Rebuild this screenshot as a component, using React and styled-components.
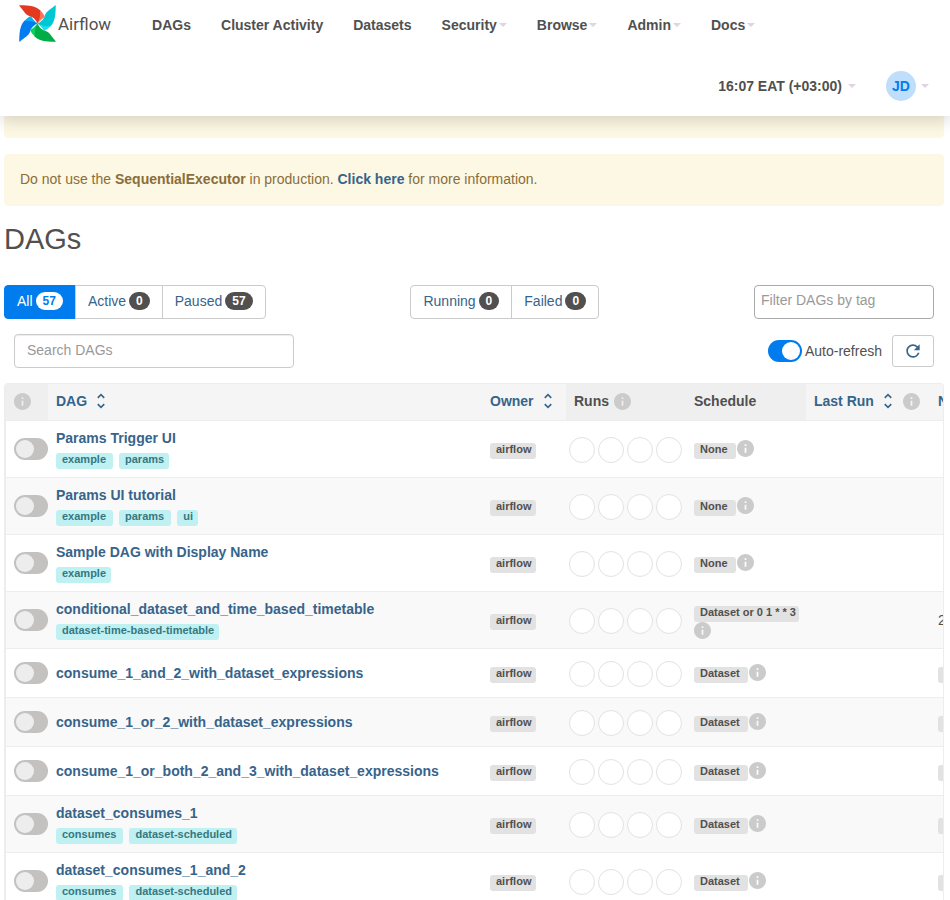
import React from "react";
import styled, { createGlobalStyle, css } from "styled-components";
import { MdRefresh, MdUnfoldMore } from "react-icons/md";

const color = {
  text: "#51504f",
  link: "#36648b",
  blue: "#017cee",
  border: "#cbcbcb",
  line: "#ededed",
  caution: "#8a6d3b",
};

const GlobalStyle = createGlobalStyle`
  * { box-sizing: border-box; }
  html { overflow: hidden; }
  body {
    margin: 0;
    background: #fff;
    color: ${color.text};
    font-family: "Liberation Sans", Arial, sans-serif;
    font-size: 14px;
    line-height: 20px;
  }
  button, input { font: inherit; color: inherit; }
  a { color: ${color.link}; text-decoration: none; }
`;

/* ---------- header ---------- */

const Header = styled.header`
  position: sticky;
  top: 0;
  z-index: 2;
  background: #fff;
  box-shadow: 0 5px 15px rgba(0, 0, 0, 0.15);
`;

const NavBar = styled.nav`
  display: flex;
  align-items: center;
  gap: 30px;
  height: 50px;
  padding-left: 19px;
`;

const UserBar = styled.div`
  display: flex;
  justify-content: flex-end;
  align-items: center;
  gap: 30px;
  height: 66px;
  padding: 5px 21px 0 0;
`;

const Brand = styled.a`
  display: flex;
  align-items: center;
  gap: 2px;
  margin: 0 11px 3px 0;
  color: ${color.text};
  font: 400 17px/20px Roboto, sans-serif;
`;

const NavLink = styled.a`
  color: ${color.text};
  font-weight: 700;
`;

const MenuButton = styled.button`
  display: flex;
  align-items: center;
  gap: ${(p) => p.$gap || 2}px;
  padding: 0;
  border: 0;
  background: none;
  font-weight: 700;
  cursor: pointer;

  &::after {
    content: "";
    border: 4px solid transparent;
    border-top-color: #e2d2e2;
    border-bottom: 0;
  }
`;

const Avatar = styled.span`
  display: grid;
  place-items: center;
  width: 30px;
  height: 30px;
  border-radius: 50%;
  background: #bfdefb;
  color: ${color.blue};
`;

/* ---------- page ---------- */

const Main = styled.main`
  padding: 0 6px 0 4px;
`;

const Alert = styled.div`
  min-height: 52px;
  margin-bottom: 16px;
  padding: 14px 15px 16px;
  border: 1px solid #fdf8e4;
  border-radius: 4px;
  background: #fdf8e3;
  color: ${color.caution};

  &:first-child { margin-top: -30px; }
  a { font-weight: 700; }
`;

const Title = styled.h2`
  margin: 0;
  font-size: 29px;
  line-height: 34px;
  font-weight: 400;
`;

const FilterRow = styled.div`
  display: flex;
  justify-content: space-between;
  margin-top: 29px;
`;

const ButtonGroup = styled.div`
  display: flex;
  height: 34px;
`;

const FilterButton = styled.button`
  display: flex;
  align-items: center;
  gap: 3px;
  padding: 0 12px 2px;
  border: 1px solid ${color.border};
  background: #fff;
  color: ${color.link};
  cursor: pointer;

  & + & { margin-left: -1px; }
  &:first-child { border-radius: 4px 0 0 4px; }
  &:last-child { border-radius: 0 4px 4px 0; }

  ${(p) => p.$active && css`
    border-color: ${color.blue};
    background: ${color.blue};
    color: #fff;
  `}
`;

const Badge = styled.span`
  padding: 3px 7px;
  border-radius: 10px;
  background: ${(p) => (p.$active ? "#fff" : color.text)};
  color: ${(p) => (p.$active ? color.blue : "#fff")};
  font-size: 12px;
  font-weight: 700;
  line-height: 12px;
`;

const TextBox = styled.input`
  width: 280px;
  height: 34px;
  padding: 0 12px 2px;
  border: 1px solid ${color.border};
  border-radius: 4px;
  background: #fff;
  box-shadow: inset 0 1px 1px rgba(0, 0, 0, 0.075);

  &::placeholder { color: #999; opacity: 1; }
`;

const TagBox = styled(TextBox)`
  width: 180px;
  margin: 0 10px;
  padding: 0 6px 4px;
  border-color: #aaa;
  box-shadow: none;
`;

const SearchRow = styled.div`
  display: flex;
  justify-content: space-between;
  align-items: center;
  margin: 15px 10px;
`;

const RefreshTools = styled.div`
  display: flex;
  align-items: center;
  gap: 10px;
`;

const SwitchLabel = styled.label`
  display: flex;
  align-items: center;
  gap: 3px;
`;

const Switch = styled.input`
  appearance: none;
  display: block;
  flex: none;
  width: 34px;
  height: 22px;
  margin: 0;
  padding: 2px;
  border-radius: 11px;
  background: #c4c2c1;
  cursor: pointer;

  &::before {
    content: "";
    display: block;
    width: 18px;
    height: 18px;
    border-radius: 50%;
    background: #ededed;
  }
  &:checked { background: ${color.blue}; }
  &:checked::before { margin-left: 12px; background: #fff; }
`;

const RefreshButton = styled.button`
  display: grid;
  place-items: center;
  width: 42px;
  height: 32px;
  padding: 0;
  border: 1px solid ${color.border};
  border-radius: 3px;
  background: #fff;
  color: ${color.link};
  cursor: pointer;
`;

/* ---------- table ---------- */

const TableFrame = styled.div`
  overflow: hidden;
  border: 1px solid ${color.line};
  border-bottom: 0;
  border-radius: 4px 4px 0 0;
`;

const Table = styled.table`
  width: calc(100% + 187px);
  table-layout: fixed;
  border-left: 1px solid ${color.line};
  border-collapse: separate;
  border-spacing: 0;
`;

const Col = styled.col`
  width: ${(p) => (p.$w ? `${p.$w}px` : "auto")};
`;

const HeadCell = styled.th`
  height: 37px;
  padding: 0 8px 2px;
  border-bottom: 1px solid ${color.line};
  background: ${(p) => (p.$plain ? "#efefef" : "#f5f5f5")};
  text-align: left;
  white-space: nowrap;
`;

const HeadContent = styled.div`
  display: flex;
  align-items: center;
  gap: 5px;
`;

const SortLink = styled.a`
  display: flex;
  align-items: center;
  gap: 4px;
`;

const Row = styled.tr`
  &:nth-child(even) { background: #f9f9f9; }
`;

const Cell = styled.td`
  height: 49px;
  padding: 7px 8px 8px;
  border-bottom: 1px solid ${color.line};
  vertical-align: middle;
  white-space: nowrap;
`;

const SwitchCell = styled(Cell)`
  padding: 0 0 1px 8px;
`;

const LabelCell = styled(Cell)`
  padding: 4px 8px 0;
`;

const RunsCell = styled(Cell)`
  padding: 1px 3px 0;
`;

const ScheduleCell = styled(Cell)`
  padding: 1px 8px 0;
`;

const DagLink = styled.a`
  display: block;
  font-weight: 700;
`;

const Tags = styled.div`
  display: flex;
  gap: 6px;
  margin-top: 5px;
`;

const Label = styled.span`
  display: block;
  width: fit-content;
  height: 16px;
  padding: 0 5px 0 6px;
  border-radius: 3px;
  background: #e2e2e2;
  color: ${color.text};
  font-size: 11px;
  font-weight: 700;
  line-height: 13px;
`;

const Tag = styled(Label).attrs({ as: "a" })`
  background: #bff0f2;
  color: #367880;

  &:not(:last-child) { padding-right: 7px; }
`;

const PendingLabel = styled(Label)`
  width: 90px;
`;

const Runs = styled.div`
  display: flex;
  gap: 3px;
`;

const Run = styled.span`
  width: 26px;
  height: 26px;
  border: 1px solid #e2e2e2;
  border-radius: 50%;
  background: #fff;
`;

const Schedule = styled.div`
  display: flex;
  flex-wrap: wrap;
  align-items: flex-start;
  column-gap: 1px;
`;

const ScheduleLabel = styled(Label)`
  margin-top: 3px;
  padding-right: ${(p) => (p.$wide ? 3 : 8)}px;
`;

const InfoSvg = styled.svg`
  display: block;
  flex: none;
  width: 17px;
  height: 17px;
  fill: #cbcbcb;
`;

function InfoIcon() {
  return (
    <InfoSvg viewBox="2 2 20 20" aria-hidden="true">
      <path d="M12 2C6.48 2 2 6.48 2 12s4.48 10 10 10 10-4.48 10-10S17.52 2 12 2zm1 15h-2v-6h2v6zm0-8h-2V7h2v2z" />
    </InfoSvg>
  );
}

const blades = [
  { turn: 270, main: "#017cee", fold: "#00b3fc" },
  { turn: 180, main: "#00ad46", fold: "#04d659" },
  { turn: 90, main: "#00c7d4", fold: "#11e1ee" },
  { turn: 0, main: "#e43921", fold: "#ff7557" },
];

function Pinwheel() {
  return (
    <svg width="37" height="37" viewBox="0 0 36 36" aria-hidden="true">
      {blades.map((b) => (
        <g key={b.turn} transform={`rotate(${b.turn} 18 18)`}>
          <path fill={b.main} d="M.3 .3C9 .2 17 1 21 5.600C22 10 21 14 18 18C16 13.500 13 11.500 10.500 11C6 9.500 5 6 .3 .8Z" />
          <path fill={b.fold} d="M20.500 5.200C23 7.500 24.500 9.500 25 11.800C22 13.500 20 15.500 18 18C20.300 14 21 10 20.500 5.200Z" />
        </g>
      ))}
    </svg>
  );
}

const menus = ["Security", "Browse", "Admin", "Docs"];

const dags = [
  { name: "Params Trigger UI", tags: ["example", "params"], schedule: "None" },
  { name: "Params UI tutorial", tags: ["example", "params", "ui"], schedule: "None" },
  { name: "Sample DAG with Display Name", tags: ["example"], schedule: "None" },
  { name: "conditional_dataset_and_time_based_timetable", tags: ["dataset-time-based-timetable"], schedule: "Dataset or 0 1 * * 3", next: "2024" },
  { name: "consume_1_and_2_with_dataset_expressions", schedule: "Dataset" },
  { name: "consume_1_or_2_with_dataset_expressions", schedule: "Dataset" },
  { name: "consume_1_or_both_2_and_3_with_dataset_expressions", schedule: "Dataset" },
  { name: "dataset_consumes_1", tags: ["consumes", "dataset-scheduled"], schedule: "Dataset" },
  { name: "dataset_consumes_1_and_2", tags: ["consumes", "dataset-scheduled"], schedule: "Dataset" },
];

function Filter({ label, count, active }) {
  return (
    <FilterButton type="button" $active={active} aria-pressed={!!active}>
      {label}
      <Badge $active={active}>{count}</Badge>
    </FilterButton>
  );
}

function Sortable({ children }) {
  return (
    <SortLink href="#sort">
      {children}
      <MdUnfoldMore size={20} aria-hidden="true" />
    </SortLink>
  );
}

function DagRow({ dag }) {
  return (
    <Row>
      <SwitchCell>
        <Switch type="checkbox" role="switch" aria-label={dag.name} />
      </SwitchCell>
      <Cell>
        <DagLink href="#dag">{dag.name}</DagLink>
        {dag.tags && (
          <Tags>
            {dag.tags.map((t) => (
              <Tag key={t} href="#tag">{t}</Tag>
            ))}
          </Tags>
        )}
      </Cell>
      <LabelCell>
        <Label as="a" href="#owner">airflow</Label>
      </LabelCell>
      <RunsCell>
        <Runs>
          <Run /><Run /><Run /><Run />
        </Runs>
      </RunsCell>
      <ScheduleCell>
        <Schedule>
          <ScheduleLabel as="a" href="#schedule" $wide={!!dag.next}>{dag.schedule}</ScheduleLabel>
          <InfoIcon />
        </Schedule>
      </ScheduleCell>
      <Cell />
      {dag.next ? (
        <Cell>{dag.next}</Cell>
      ) : (
        <LabelCell>{dag.schedule === "Dataset" && <PendingLabel />}</LabelCell>
      )}
    </Row>
  );
}

export default function App() {
  return (
    <>
      <GlobalStyle />
      <Header>
        <NavBar>
          <Brand href="#home"><Pinwheel />Airflow</Brand>
          <NavLink href="#dags">DAGs</NavLink>
          <NavLink href="#activity">Cluster Activity</NavLink>
          <NavLink href="#datasets">Datasets</NavLink>
          {menus.map((m) => (
            <MenuButton key={m} type="button">{m}</MenuButton>
          ))}
        </NavBar>
        <UserBar>
          <MenuButton type="button" $gap={6}>16:07 EAT (+03:00)</MenuButton>
          <MenuButton type="button" $gap={5}><Avatar>JD</Avatar></MenuButton>
        </UserBar>
      </Header>
      <Main>
        <Alert />
        <Alert>
          Do not use the <b>SequentialExecutor</b> in production. <a href="#docs">Click here</a> for more information.
        </Alert>
        <Title>DAGs</Title>
        <FilterRow>
          <ButtonGroup>
            <Filter label="All" count={57} active />
            <Filter label="Active" count={0} />
            <Filter label="Paused" count={57} />
          </ButtonGroup>
          <ButtonGroup>
            <Filter label="Running" count={0} />
            <Filter label="Failed" count={0} />
          </ButtonGroup>
          <TagBox type="text" placeholder="Filter DAGs by tag" aria-label="Filter DAGs by tag" />
        </FilterRow>
        <SearchRow>
          <TextBox type="search" placeholder="Search DAGs" aria-label="Search DAGs" />
          <RefreshTools>
            <SwitchLabel>
              <Switch type="checkbox" role="switch" defaultChecked />
              Auto-refresh
            </SwitchLabel>
            <RefreshButton type="button" aria-label="Refresh">
              <MdRefresh size={20} />
            </RefreshButton>
          </RefreshTools>
        </SearchRow>
        <TableFrame>
          <Table>
            <colgroup>
              <Col $w={42} /><Col /><Col $w={84} /><Col $w={120} /><Col $w={120} /><Col $w={124} /><Col $w={200} />
            </colgroup>
            <thead>
              <tr>
                <HeadCell $plain><InfoIcon /></HeadCell>
                <HeadCell><Sortable>DAG</Sortable></HeadCell>
                <HeadCell><Sortable>Owner</Sortable></HeadCell>
                <HeadCell $plain><HeadContent>Runs<InfoIcon /></HeadContent></HeadCell>
                <HeadCell $plain>Schedule</HeadCell>
                <HeadCell><HeadContent><Sortable>Last Run</Sortable><InfoIcon /></HeadContent></HeadCell>
                <HeadCell><Sortable>Next Run</Sortable></HeadCell>
              </tr>
            </thead>
            <tbody>
              {dags.map((d) => <DagRow key={d.name} dag={d} />)}
            </tbody>
          </Table>
        </TableFrame>
      </Main>
    </>
  );
}
